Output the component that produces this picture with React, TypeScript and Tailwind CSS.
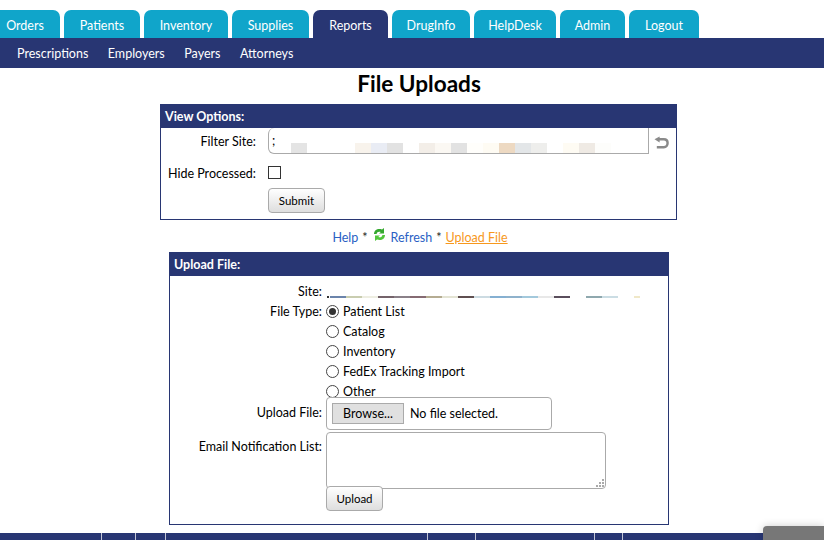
import React from "react";

const tabs = [
  ["Orders", "w-[70px]", false],
  ["Patients", "w-[76px]", false],
  ["Inventory", "w-[84px]", false],
  ["Supplies", "w-[77px]", false],
  ["Reports", "w-[75px]", true],
  ["DrugInfo", "w-[78px]", false],
  ["HelpDesk", "w-[82px]", false],
  ["Admin", "w-[65px]", false],
  ["Logout", "w-[70px]", false],
] as const;

const filterBlocks = ["#ffffff", "#e4e4e4", "#ffffff", "#ffffff", "#ffffff", "#f8f3ec", "#e9ecf4", "#e2e2e2", "#ffffff", "#f3eee8", "#fbf8f3", "#e2e2e2", "#fffefb", "#fefbf3", "#edd9c2", "#e3e6e8", "#eeeeec", "#ffffff", "#fefbf3", "#efeae4", "#fdfdfb"];
const siteLine = ["#6b84ab", "#c9cdb0", "#eeeee2", "#74636a", "#8a8088", "#856a72", "#b5ac92", "#e4e4d4", "#5f4f50", "#ccdbe2", "#85b0d2", "#8fb2cc", "#a3c9dc", "#e8e8e8", "#5a4e5c", "#ffffff", "#8fa8ae", "#cbdde4", "#ffffff"];

const Btn = ({ children, className = "" }: { children: React.ReactNode; className?: string }) => (
  <button className={`h-[25px] w-[57px] rounded-[4px] border border-[#aaaaaa] bg-gradient-to-b from-white to-[#dedede] text-[11.5px] text-black ${className}`}>{children}</button>
);

const Radio = ({ label, checked = false }: { label: string; checked?: boolean }) => (
  <div className="flex h-5 items-center gap-[4px]">
    <span className="mb-[1px] flex h-[13px] w-[13px] items-center justify-center rounded-full border border-[#444444] bg-white">
      {checked && <span className="h-[7px] w-[7px] rounded-full bg-[#333333]" />}
    </span>
    <span>{label}</span>
  </div>
);

export default function App() {
  return (
    <div className="relative flex h-[540px] flex-col overflow-hidden bg-white text-[12.5px] text-black [font-family:'Lato','Liberation_Sans',sans-serif]">
      <div className="ml-[-10px] flex gap-1 pt-[10px]">
        {tabs.map(([name, w, active]) => (
          <div key={name} className={`flex h-[28px] items-center justify-center rounded-t-[7px] pt-[4px] text-white ${w} ${active ? "bg-[#283673]" : "bg-[#10a5ca]"}`}>{name}</div>
        ))}
      </div>
      <div className="flex h-[30px] items-center gap-[19.5px] bg-[#283673] pl-[17px] pt-[2px] text-white">
        <span>Prescriptions</span><span>Employers</span><span>Payers</span><span>Attorneys</span>
      </div>
      <h1 className="h-[36px] pl-[14px] text-center text-[22.6px] font-bold leading-[32px]">File Uploads</h1>

      <section className="ml-[160px] h-[116px] w-[517px] border border-[#283673]">
        <div className="h-[23px] bg-[#283673] pl-1 font-bold leading-[23px] text-white">View Options:</div>
        <div className="flex items-center">
          <div className="w-[95px] whitespace-nowrap pt-[2px] text-right">Filter Site:</div>
          <div className="ml-[12px] flex h-[26px] w-[381px] overflow-hidden rounded-l-[6px] border-b border-l border-r border-[#aaaaaa] pl-[3px]">
            <span className="h-[16px] w-[3px] leading-[26px]">;</span>
            <div className="mt-[15px] flex h-[10px]">
              {filterBlocks.map((c, i) => <span key={i} className="h-[10px] w-4" style={{ backgroundColor: c }} />)}
            </div>
          </div>
          <svg className="ml-[5px] mt-[3px]" width="15" height="14" viewBox="0 0 16 14" fill="none">
            <path d="M5 3H10.5C13 3 14.5 4.6 14.5 7C14.5 9.4 13 11.5 10.5 11.5H3" stroke="#8a8a8a" strokeWidth="2.6" />
            <path d="M6 0L0.5 3L6 6.5Z" fill="#8a8a8a" />
          </svg>
        </div>
        <div className="mt-[11px] flex items-center">
          <div className="w-[95px] whitespace-nowrap text-right">Hide Processed:</div>
          <span className="mb-[3px] ml-[12px] h-[13px] w-[13px] border border-[#333333] bg-white" />
        </div>
        <div className="ml-[107px] mt-[4px]"><Btn>Submit</Btn></div>
      </section>

      <div className="flex h-[32px] items-center justify-center pl-[16px] pt-[4px] text-[#2a5fc4]">
        <span>Help</span><span className="mx-1 text-[#222]">*</span>
        <svg className="mb-[7px] mr-[4px]" width="15" height="15" viewBox="0 0 15 15">
          <path d="M2 7C2 3 6 1 10 2.5L12 1V6.5H7L8.8 5C6.5 4.2 5 5 4.6 7Z" fill="#35a82f" />
          <path d="M13 8C13 12 9 14 5 12.5L3 14V8.5H8L6.2 10C8.5 10.8 10 10 10.4 8Z" fill="#52c63c" />
        </svg>
        <span>Refresh</span><span className="mx-1 text-[#222]">*</span>
        <span className="text-[#f7981d] underline">Upload File</span>
      </div>

      <section className="ml-[169px] h-[273px] w-[500px] border border-[#283673]">
        <div className="h-[23px] bg-[#283673] pl-1 font-bold leading-[24px] text-white">Upload File:</div>
        <div className="mt-[6px] flex h-[20px] items-center">
          <div className="w-[152px] text-right">Site:</div>
          <div className="ml-[5px] mt-[10px] flex h-[2px] items-center">
            <span className="h-[2px] w-[2px] bg-[#333333]" />
            <span className="w-[1px]" />
            {siteLine.map((c, i) => <span key={i} className="h-[2px] w-4" style={{ backgroundColor: c }} />)}
            <span className="h-[2px] w-[6px] bg-[#f0e8c8]" />
          </div>
        </div>
        <div className="flex">
          <div className="w-[152px] text-right leading-[20px]">File Type:</div>
          <div className="ml-[4px] flex h-[100px] flex-col">
            <Radio label="Patient List" checked />
            <Radio label="Catalog" />
            <Radio label="Inventory" />
            <Radio label="FedEx Tracking Import" />
            <Radio label="Other" />
          </div>
        </div>
        <div className="flex">
          <div className="w-[152px] pt-[1px] text-right leading-[20px]">Upload File:</div>
          <div className="ml-[4px] mt-[-5px] flex h-[33px] w-[226px] items-center gap-[6px] rounded-[4px] border border-[#aaaaaa] bg-white pl-[5px]">
            <span className="flex h-[21px] w-[72px] items-center justify-center border border-[#aaaaaa] bg-[#e0e0e0] pt-[1px]">Browse...</span>
            <span className="pt-[1px]">No file selected.</span>
          </div>
        </div>
        <div className="mt-[2px] flex">
          <div className="w-[152px] pt-[5px] text-right leading-[20px]">Email Notification List:</div>
          <div className="ml-[4px]">
            <div className="relative h-[57px] w-[280px] rounded-[4px] border border-[#aaaaaa] bg-white">
              <svg className="absolute bottom-[1px] right-[1px]" width="9" height="9" viewBox="0 0 9 9" fill="#aaaaaa">
                <rect x="7" y="1" width="2" height="2" /><rect x="4" y="4" width="2" height="2" /><rect x="7" y="4" width="2" height="2" /><rect x="1" y="7" width="2" height="2" /><rect x="4" y="7" width="2" height="2" /><rect x="7" y="7" width="2" height="2" />
              </svg>
            </div>
            <Btn className="relative mt-[-3px] block">Upload</Btn>
          </div>
        </div>
      </section>

      <div className="mt-[8px] flex h-[7px] bg-[#283673]">
        {["w-[102px]", "w-[34px]", "w-[30px]", "w-[262px]", "w-[48px]", "w-[119px]", "w-[28px]"].map((w, i) => (
          <span key={i} className={`h-[7px] border-r border-[#c4c7d6] ${w}`} />
        ))}
      </div>
      <div className="absolute bottom-0 right-0 h-[14px] w-[61px] rounded-tl-[4px] bg-[#777777] shadow-[0_0_8px_rgba(0,0,0,0.2)]" />
    </div>
  );
}
